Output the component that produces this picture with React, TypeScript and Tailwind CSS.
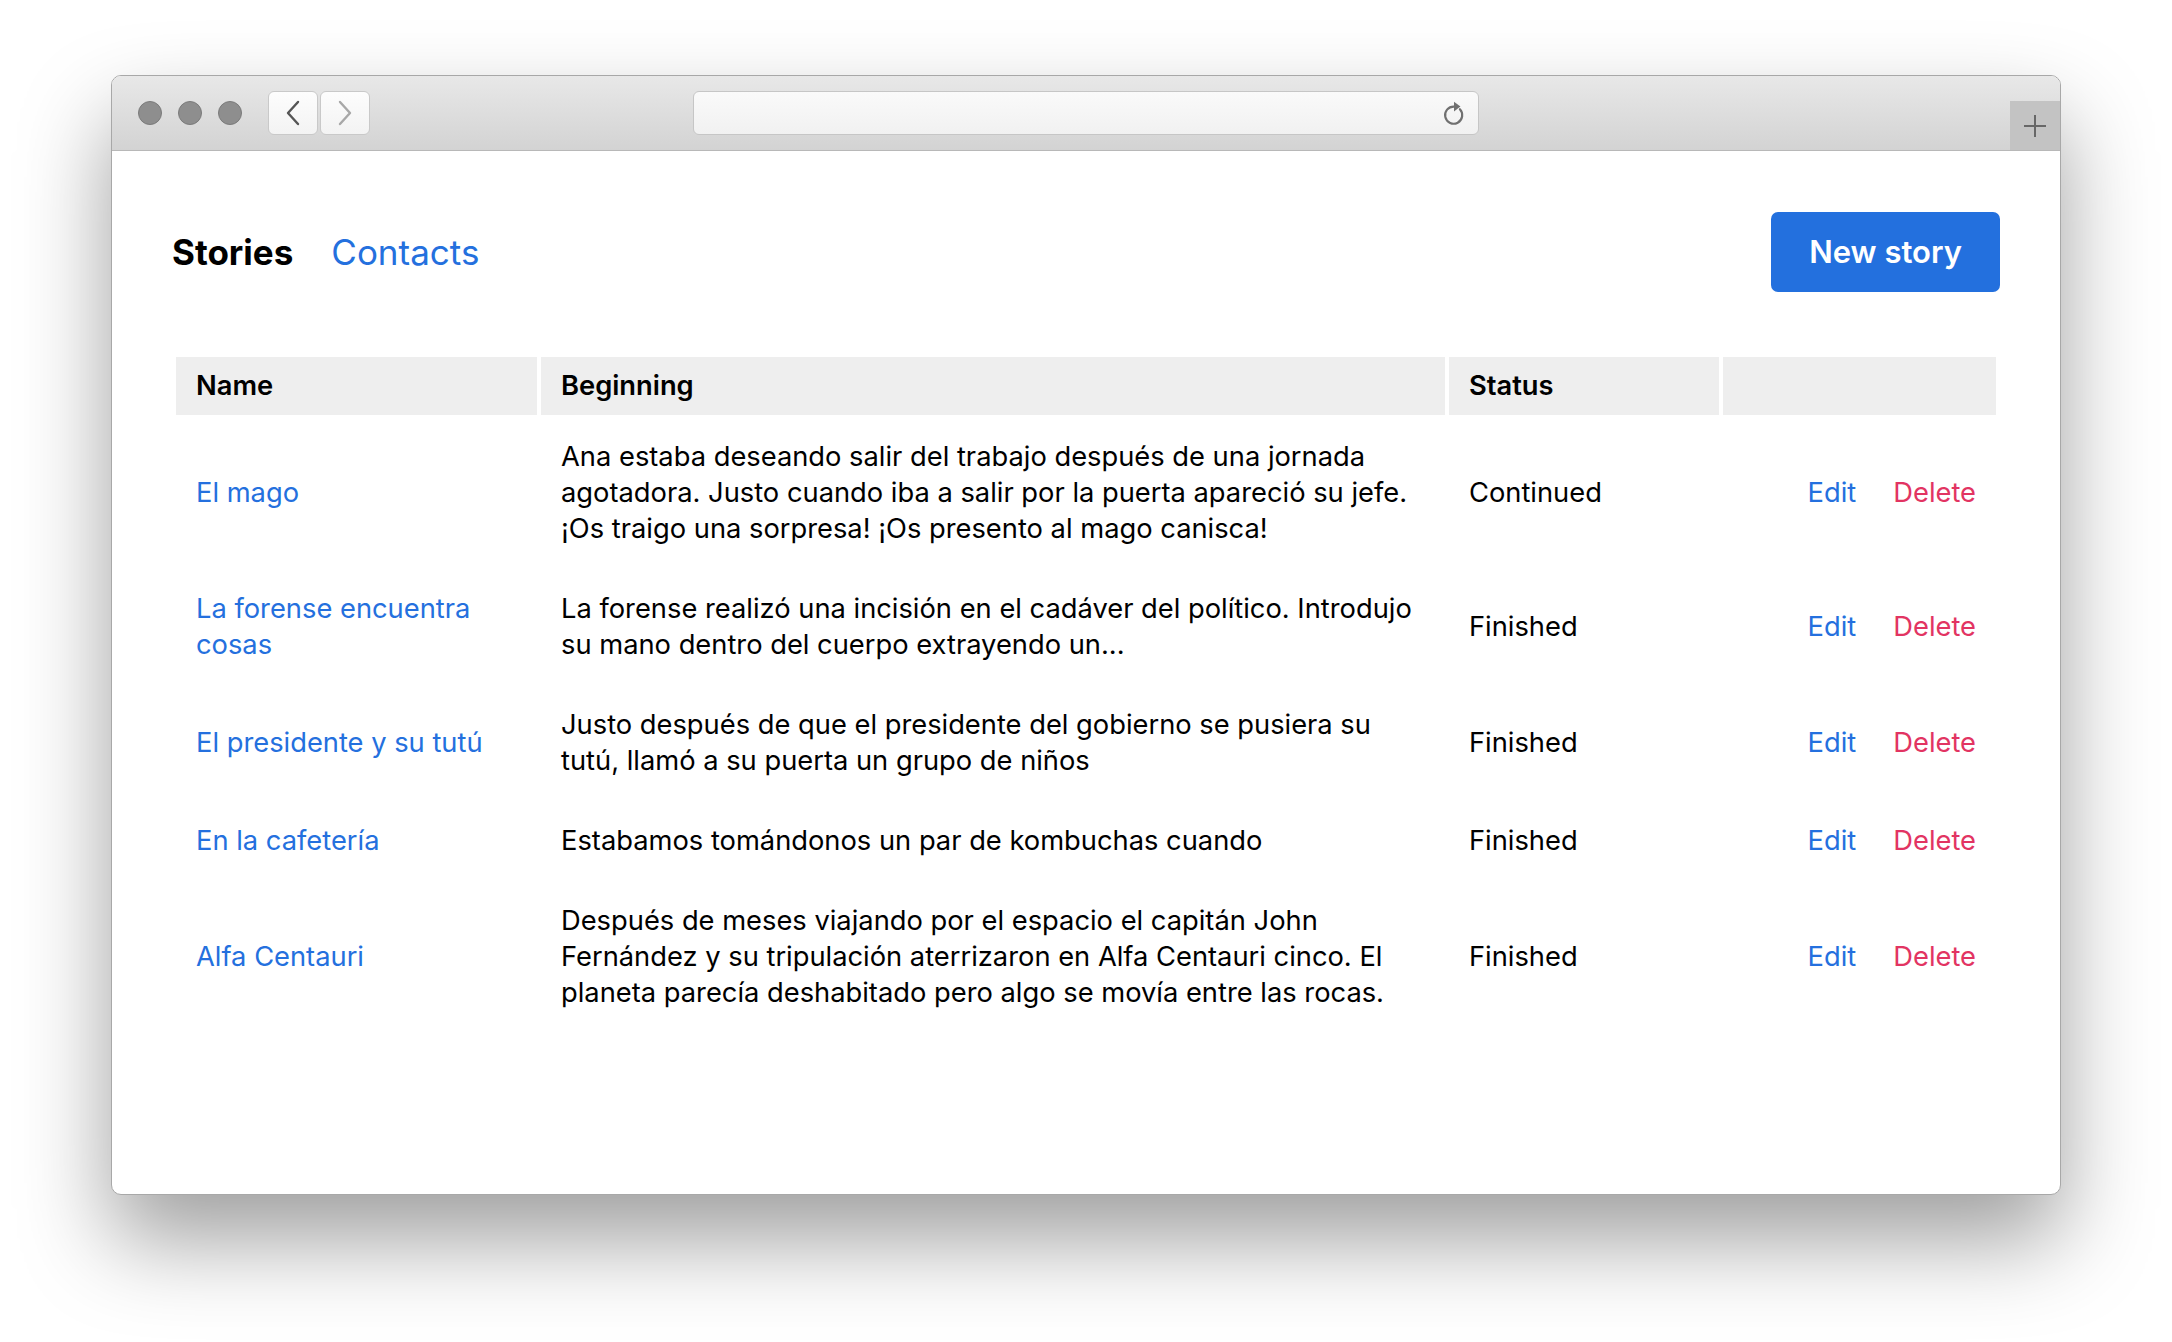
import React from 'react'

const stories = [
  {
    name: 'El mago',
    beginning:
      'Ana estaba deseando salir del trabajo después de una jornada agotadora. Justo cuando iba a salir por la puerta apareció su jefe. ¡Os traigo una sorpresa! ¡Os presento al mago canisca!',
    status: 'Continued',
  },
  {
    name: 'La forense encuentra cosas',
    beginning:
      'La forense realizó una incisión en el cadáver del político. Introdujo su mano dentro del cuerpo extrayendo un...',
    status: 'Finished',
  },
  {
    name: 'El presidente y su tutú',
    beginning:
      'Justo después de que el presidente del gobierno se pusiera su tutú, llamó a su puerta un grupo de niños',
    status: 'Finished',
  },
  {
    name: 'En la cafetería',
    beginning: 'Estabamos tomándonos un par de kombuchas cuando',
    status: 'Finished',
  },
  {
    name: 'Alfa Centauri',
    beginning:
      'Después de meses viajando por el espacio el capitán John Fernández y su tripulación aterrizaron en Alfa Centauri cinco. El planeta parecía deshabitado pero algo se movía entre las rocas.',
    status: 'Finished',
  },
]

function TrafficLight() {
  return <div className="w-[24px] h-[24px] rounded-full bg-[#8e8e8e] border border-[#7b7b7b]" />
}

function Toolbar() {
  return (
    <div className="relative h-[75px] shrink-0 flex items-center bg-gradient-to-b from-[#e8e8e8] to-[#d3d3d3] border-b border-[#b8b8b8]">
      <div className="flex items-center gap-[16px] pl-[26px]">
        <TrafficLight />
        <TrafficLight />
        <TrafficLight />
      </div>
      <div className="flex gap-[2px] ml-[26px]">
        <div className="w-[50px] h-[44px] rounded-[6px] bg-gradient-to-b from-[#fdfdfd] to-[#f3f3f3] border border-[#c9c9c9] flex items-center justify-center">
          <svg width="16" height="26" viewBox="0 0 16 26" fill="none">
            <path d="M13 2L3 13l10 11" stroke="#555" strokeWidth="2.4" strokeLinecap="round" strokeLinejoin="round" />
          </svg>
        </div>
        <div className="w-[50px] h-[44px] rounded-[6px] bg-gradient-to-b from-[#fdfdfd] to-[#f3f3f3] border border-[#c9c9c9] flex items-center justify-center">
          <svg width="16" height="26" viewBox="0 0 16 26" fill="none">
            <path d="M3 2l10 11L3 24" stroke="#a8a8a8" strokeWidth="2.4" strokeLinecap="round" strokeLinejoin="round" />
          </svg>
        </div>
      </div>
      <div className="ml-[323px] w-[786px] h-[44px] rounded-[6px] bg-gradient-to-b from-[#fafafa] to-[#f1f1f1] border border-[#c6c6c6] flex items-center justify-end pr-[10px]">
        <svg width="28" height="30" viewBox="0 0 26 28" fill="none">
          <path d="M18.5 10.5a8 8 0 1 1-5.5-2.5" stroke="#707070" strokeWidth="2" strokeLinecap="round" />
          <path d="M13 3.5l6 4.5-6 4.5z" fill="#707070" />
        </svg>
      </div>
      <div className="absolute right-0 bottom-0 w-[50px] h-[49px] bg-[#c3c3c3] flex items-center justify-center">
        <svg width="24" height="24" viewBox="0 0 24 24">
          <path d="M12 1v22M1 12h22" stroke="#676767" strokeWidth="2" />
        </svg>
      </div>
    </div>
  )
}

export default function App() {
  return (
    <div className="w-[2172px] h-[1342px] bg-white pt-[75px] pl-[111px] font-['Inter',sans-serif] text-black">
      <div className="w-[1950px] h-[1120px] rounded-[10px] border border-[#a8a8a8] bg-white overflow-hidden flex flex-col shadow-[0_45px_90px_rgba(0,0,0,0.38)]">
        <Toolbar />
        <div className="px-[60px] pt-[61px]">
          <div className="flex items-center justify-between">
            <div className="flex items-center gap-[38px] text-[35px] leading-[44px]">
              <span className="font-bold">Stories</span>
              <a className="text-[#2470de]">Contacts</a>
            </div>
            <button className="h-[80px] px-[38px] rounded-[7px] bg-[#2370de] text-white text-[31px] font-semibold">
              New story
            </button>
          </div>
          <table className="w-full mt-[61px] table-fixed border-separate border-spacing-[4px] text-[27.3px] leading-[36px]">
            <thead>
              <tr className="text-left">
                <th className="w-[361px] bg-[#eeeeee] px-[20px] py-[11px] font-semibold">Name</th>
                <th className="w-[904px] bg-[#eeeeee] px-[20px] py-[11px] font-semibold">Beginning</th>
                <th className="w-[270px] bg-[#eeeeee] px-[20px] py-[11px] font-semibold">Status</th>
                <th className="bg-[#eeeeee] px-[20px] py-[11px]" />
              </tr>
            </thead>
            <tbody>
              {stories.map((s) => (
                <tr key={s.name}>
                  <td className="px-[20px] py-[20px] align-middle">
                    <a className="text-[#2470de]">{s.name}</a>
                  </td>
                  <td className="px-[20px] py-[20px] align-middle">{s.beginning}</td>
                  <td className="px-[20px] py-[20px] align-middle">{s.status}</td>
                  <td className="px-[20px] py-[20px] align-middle text-right whitespace-nowrap">
                    <a className="text-[#2470de]">Edit</a>
                    <a className="ml-[37px] text-[#e23462]">Delete</a>
                  </td>
                </tr>
              ))}
            </tbody>
          </table>
        </div>
      </div>
    </div>
  )
}
